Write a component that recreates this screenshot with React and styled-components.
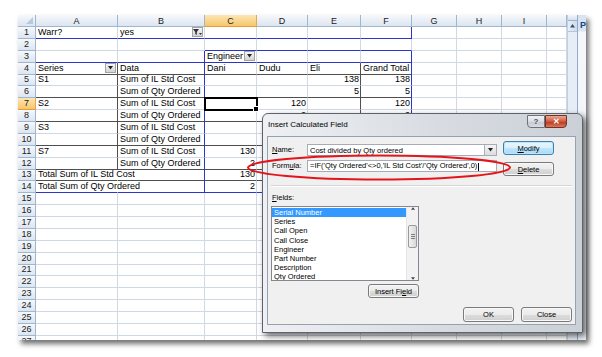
import React from "react";
import styled, { createGlobalStyle, css } from "styled-components";

const GlobalStyle = createGlobalStyle`
  html, body {
    margin: 0;
    padding: 0;
    background: #fff;
  }
  body {
    font-family: "Liberation Sans", Arial, sans-serif;
  }
`;

const BLUE = "#2c35c9";
const DARK = "#4f4f4f";
const GRID = "#d0d8e4";
const HEAD_LINE = "#9eb6ce";

const COLS = ["A", "B", "C", "D", "E", "F", "G", "H", "I", ""];
const WIDTHS = [82, 87, 52, 51, 53, 51, 45, 45, 45, 20];

const TEXT = {
  A1: "Warr?",
  B1: "yes",
  C3: "Engineer",
  A4: "Series",
  B4: "Data",
  C4: "Dani",
  D4: "Dudu",
  E4: "Eli",
  F4: "Grand Total",
  A5: "S1",
  B5: "Sum of IL Std Cost",
  E5: "138",
  F5: "138",
  B6: "Sum of Qty Ordered",
  E6: "5",
  F6: "5",
  A7: "S2",
  B7: "Sum of IL Std Cost",
  D7: "120",
  F7: "120",
  B8: "Sum of Qty Ordered",
  D8: "2",
  F8: "2",
  A9: "S3",
  B9: "Sum of IL Std Cost",
  B10: "Sum of Qty Ordered",
  A11: "S7",
  B11: "Sum of IL Std Cost",
  C11: "130",
  B12: "Sum of Qty Ordered",
  C12: "2",
  A13: "Total Sum of IL Std Cost",
  C13: "130",
  A14: "Total Sum of Qty Ordered",
  C14: "2",
};

const FIELDS = [
  "Serial Number",
  "Series",
  "Call Open",
  "Call Close",
  "Engineer",
  "Part Number",
  "Description",
  "Qty Ordered",
];

// pivot table outline: which edges get a blue or dark line
const borderFor = (r, ci) => {
  let right;
  let bottom;
  if (ci <= 5) {
    if (r === 1 || r === 3 || r === 14) bottom = BLUE;
    if (r === 2 && ci >= 2) bottom = BLUE;
    if ([4, 6, 8, 10, 12, 13].includes(r)) bottom = DARK;
  }
  if (r === 1 && ci === 5) right = BLUE;
  if (r === 3 && (ci === 1 || ci === 5)) right = BLUE;
  if (r >= 4 && r <= 14) {
    if (ci === 0) right = r >= 13 ? "transparent" : DARK;
    if (ci === 1 || ci === 5) right = BLUE;
    if (ci === 4) right = DARK;
  }
  return { right, bottom };
};

const Stage = styled.div`
  position: relative;
  width: 602px;
  height: 357px;
  overflow: hidden;
  background: #fff;
  padding: 15px 0 0 18px;
  box-sizing: border-box;
`;

const ExcelWindow = styled.div`
  display: flex;
  width: 568px;
  height: 325px;
  background: #fff;
  box-shadow: 3px 4px 5px rgba(0, 0, 0, 0.55);
  overflow: hidden;
`;

const Sheet = styled.div`
  display: grid;
  grid-template-columns: 18px ${WIDTHS.map((w) => w + "px").join(" ")};
  grid-template-rows: 12px repeat(27, 11.88px);
  align-content: start;
  font-size: 9px;
  color: #000;
  overflow: hidden;
`;

const headBg = (active) =>
  active
    ? "linear-gradient(#fce6b4, #f7c66c)"
    : "linear-gradient(#f6f8fc, #dce5f0)";

const Corner = styled.div`
  position: relative;
  box-sizing: border-box;
  background: ${headBg(false)};
  border-right: 1px solid ${HEAD_LINE};
  border-bottom: 1px solid ${HEAD_LINE};

  &::after {
    content: "";
    position: absolute;
    right: 2px;
    bottom: 2px;
    border-left: 7px solid transparent;
    border-bottom: 7px solid #b9c8da;
  }
`;

const ColHead = styled.div`
  box-sizing: border-box;
  display: flex;
  align-items: center;
  justify-content: center;
  background: ${(p) => headBg(p.$active)};
  border-right: 1px solid ${(p) => (p.$active ? "#eaa64a" : HEAD_LINE)};
  border-bottom: 1px solid ${(p) => (p.$active ? "#e99a32" : HEAD_LINE)};
  color: #222;
`;

const RowHead = styled(ColHead)`
  line-height: 1;
`;

const Cell = styled.div`
  position: relative;
  box-sizing: border-box;
  display: flex;
  align-items: center;
  justify-content: ${(p) => (p.$num ? "flex-end" : "space-between")};
  padding: 0 1px 0 2px;
  border-right: 1px solid ${(p) => p.$r || GRID};
  border-bottom: 1px solid ${(p) => p.$b || GRID};
  white-space: nowrap;
  line-height: 1;

  ${(p) =>
    p.$active &&
    css`
      outline: 2px solid #000;
      outline-offset: -1px;
      z-index: 2;

      &::after {
        content: "";
        position: absolute;
        right: -3px;
        bottom: -3px;
        width: 4px;
        height: 4px;
        background: #000;
        border: 1px solid #fff;
      }
    `}
`;

const DropButton = styled.span`
  flex-shrink: 0;
  width: 11px;
  height: 10px;
  box-sizing: border-box;
  display: flex;
  align-items: center;
  justify-content: center;
  border: 1px solid #a3a3a3;
  background: linear-gradient(#f7f7f7, #d4d4d4);
`;

const VScroll = styled.div`
  width: 10px;
  flex-shrink: 0;
  box-sizing: border-box;
  display: flex;
  flex-direction: column;
  background: #e6edf6;
  border-left: 1px solid #c3cfdf;
`;

const SplitBox = styled.div`
  height: 5px;
  border-bottom: 1px solid #9fb3cb;
  background: linear-gradient(#f3f6fb, #d5e0ee);
`;

const ScrollArrow = styled.div`
  height: 10px;
  display: flex;
  align-items: center;
  justify-content: center;
  border-bottom: 1px solid #b5c5d9;
  background: linear-gradient(90deg, #e7eef7, #cfdbea);
`;

const TaskPane = styled.div`
  flex: 1;
  overflow: hidden;
  box-sizing: border-box;
  padding: 5px 0 0 2px;
  background: linear-gradient(#d9e4f3 0, #d9e4f3 16px, #f4f7fb 17px, #eef3f9);
  border-left: 1px solid #94aacb;
  color: #15428b;
  font-size: 9px;
  font-weight: bold;
  white-space: nowrap;
`;

const Dialog = styled.div`
  position: absolute;
  left: 262px;
  top: 113px;
  width: 321px;
  height: 220px;
  box-sizing: border-box;
  display: flex;
  flex-direction: column;
  padding: 0 6px 7px 4px;
  border: 1px solid #5d636b;
  border-radius: 6px 6px 0 0;
  background: linear-gradient(90deg, #eef0f3, #d8dce2 55%, #cbd0d7);
  box-shadow: 3px 3px 6px rgba(0, 0, 0, 0.6);
  font-family: "Liberation Sans", Arial, sans-serif;
  color: #000;
`;

const TitleBar = styled.div`
  height: 22px;
  flex-shrink: 0;
  display: flex;
  justify-content: space-between;
  align-items: flex-start;
`;

const Title = styled.span`
  padding-left: 1px;
  font-size: 8px;
  line-height: 22px;
`;

const CaptionGroup = styled.div`
  display: flex;
  margin: 1px 9px 0 0;
`;

const CaptionButton = styled.div`
  width: ${(p) => (p.$close ? 22 : 18)}px;
  height: 13px;
  box-sizing: border-box;
  display: flex;
  align-items: center;
  justify-content: center;
  font-size: 8px;
  font-weight: bold;
  border: 1px solid ${(p) => (p.$close ? "#6e3428" : "#6a727d")};
  border-radius: ${(p) => (p.$close ? "0 0 4px 0" : "0 0 0 4px")};
  color: ${(p) => (p.$close ? "#fff" : "#4a4f57")};
  background: ${(p) =>
    p.$close
      ? "linear-gradient(#e9a896, #d0573c 50%, #c23d22 60%, #d77a62)"
      : "linear-gradient(#f1f3f6, #d9dde3 50%, #c7ccd3 60%, #d9dde3)"};
`;

const Client = styled.div`
  flex: 1;
  box-sizing: border-box;
  display: flex;
  flex-direction: column;
  padding: 4px 3px 0 3px;
  border: 1px solid #96a2b2;
  background: #f0f0f0;
  font-size: 7.5px;
`;

const TopSection = styled.div`
  display: flex;
  gap: 6px;
`;

const LeftCol = styled.div`
  display: flex;
  flex-direction: column;
  gap: 4px;
  margin-top: 3px;
`;

const FieldRow = styled.div`
  display: flex;
  align-items: center;
  height: 12px;
`;

const Label = styled.span`
  width: 36px;
  padding-left: 1px;
  box-sizing: border-box;
  line-height: 10px;
`;

const TextBox = styled.div`
  width: 190px;
  height: 12px;
  box-sizing: border-box;
  display: flex;
  align-items: center;
  justify-content: space-between;
  padding-left: 2px;
  background: #fff;
  border: 1px solid #a4acb8;
  white-space: nowrap;
  overflow: hidden;
`;

const Caret = styled.span`
  display: inline-block;
  width: 1px;
  height: 8px;
  margin-left: 1px;
  background: #000;
  vertical-align: middle;
`;

const ComboArrow = styled.span`
  width: 12px;
  height: 10px;
  box-sizing: border-box;
  display: flex;
  align-items: center;
  justify-content: center;
  border-left: 1px solid #a9b0ba;
  background: linear-gradient(#f4f4f4, #dcdcdc);
`;

const ButtonCol = styled.div`
  display: flex;
  flex-direction: column;
  gap: 7px;
`;

const Button = styled.div`
  width: 51px;
  height: ${(p) => p.$h || 14}px;
  box-sizing: border-box;
  display: flex;
  align-items: center;
  justify-content: center;
  border: 1px solid ${(p) => (p.$default ? "#3c7fb1" : "#7a7a7a")};
  border-radius: 3px;
  background: ${(p) =>
    p.$default
      ? "linear-gradient(#eaf6fd, #d9f0fc 50%, #bee6fd 51%, #a7d9f5)"
      : "linear-gradient(#f2f2f2, #ebebeb 50%, #dddddd 51%, #cfcfcf)"};
  box-shadow: inset 0 0 0 1px ${(p) => (p.$default ? "#bfe6f8" : "#f8f8f8")};
`;

const Separator = styled.div`
  height: 1px;
  margin-top: 9px;
  background: #d6d6d6;
  border-bottom: 1px solid #fff;
`;

const FieldsLabel = styled.div`
  margin-top: 6px;
  height: 10px;
  line-height: 10px;
  padding-left: 1px;
`;

const ListBox = styled.div`
  width: 148px;
  height: 75px;
  margin-top: 3px;
  box-sizing: border-box;
  display: flex;
  border: 1px solid #828790;
  background: #fff;
`;

const ListItems = styled.div`
  flex: 1;
  padding-top: 1px;
  overflow: hidden;
`;

const ListItem = styled.div`
  height: 9.2px;
  line-height: 9.2px;
  padding-left: 2px;
  white-space: nowrap;
  background: ${(p) => (p.$selected ? "#3399ff" : "transparent")};
  color: ${(p) => (p.$selected ? "#fff" : "#000")};
`;

const ListScroll = styled.div`
  width: 11px;
  display: flex;
  flex-direction: column;
  align-items: center;
  justify-content: space-between;
  background: #f2f2f2;
  border-left: 1px solid #e6e6e6;
`;

const Thumb = styled.div`
  width: 9px;
  height: 23px;
  margin-top: -14px;
  box-sizing: border-box;
  display: flex;
  flex-direction: column;
  align-items: center;
  justify-content: center;
  gap: 1px;
  border: 1px solid #9a9a9a;
  border-radius: 2px;
  background: linear-gradient(90deg, #f2f2f2, #d8d8d8);
`;

const Grip = styled.span`
  width: 4px;
  height: 1px;
  background: #7d7d7d;
`;

const InsertRow = styled.div`
  width: 148px;
  margin-top: 3px;
  display: flex;
  justify-content: flex-end;
`;

const BottomRow = styled.div`
  margin-top: 9px;
  display: flex;
  justify-content: flex-end;
  gap: 7px;
`;

const RedRing = styled.svg`
  position: absolute;
  left: 0;
  top: 0;
  pointer-events: none;
`;

const Acc = styled.span`
  text-decoration: underline;
`;

const Tri = ({ up, size = 5, color = "#222" }) => (
  <svg width={size} height={size / 2 + 1} viewBox="0 0 6 4">
    <path d={up ? "M0 4 L3 0 L6 4 Z" : "M0 0 L6 0 L3 4 Z"} fill={color} />
  </svg>
);

const FilterIcon = () => (
  <svg width="9" height="8" viewBox="0 0 9 8">
    <path d="M0 1 H6 L3.8 4 V7 L2.2 6 V4 Z" fill="#333" />
    <path d="M6 5 H9 L7.5 7 Z" fill="#333" />
  </svg>
);

const renderCell = (r, ci) => {
  const col = COLS[ci];
  const key = col + r;
  const value = TEXT[key];
  const { right, bottom } = borderFor(r, ci);
  const num = value !== undefined && /^\d+$/.test(value);
  return (
    <Cell key={key || ci} $r={right} $b={bottom} $num={num} $active={key === "C7"}>
      {value && <span>{value}</span>}
      {key === "B1" && (
        <DropButton>
          <FilterIcon />
        </DropButton>
      )}
      {(key === "A4" || key === "C3") && (
        <DropButton>
          <Tri size={5} />
        </DropButton>
      )}
    </Cell>
  );
};

export default function App() {
  return (
    <>
      <GlobalStyle />
      <Stage>
        <ExcelWindow>
          <Sheet>
            <Corner />
            {COLS.map((c, i) => (
              <ColHead key={"h" + i} $active={c === "C"}>
                {c}
              </ColHead>
            ))}
            {Array.from({ length: 27 }, (_, ri) => {
              const r = ri + 1;
              return (
                <React.Fragment key={r}>
                  <RowHead $active={r === 7}>{r}</RowHead>
                  {COLS.map((_, ci) => renderCell(r, ci))}
                </React.Fragment>
              );
            })}
          </Sheet>
          <VScroll>
            <SplitBox />
            <ScrollArrow>
              <Tri up size={5} color="#3b4f6b" />
            </ScrollArrow>
          </VScroll>
          <TaskPane>PivotTable Field List</TaskPane>
        </ExcelWindow>

        <Dialog>
          <TitleBar>
            <Title>Insert Calculated Field</Title>
            <CaptionGroup>
              <CaptionButton>?</CaptionButton>
              <CaptionButton $close>✕</CaptionButton>
            </CaptionGroup>
          </TitleBar>
          <Client>
            <TopSection>
              <LeftCol>
                <FieldRow>
                  <Label>
                    <Acc>N</Acc>ame:
                  </Label>
                  <TextBox>
                    <span>Cost divided by Qty ordered</span>
                    <ComboArrow>
                      <Tri size={5} />
                    </ComboArrow>
                  </TextBox>
                </FieldRow>
                <FieldRow>
                  <Label>
                    Form<Acc>u</Acc>la:
                  </Label>
                  <TextBox>
                    <span>
                      =IF('Qty Ordered'&lt;&gt;0,'IL Std Cost'/'Qty Ordered',0)
                      <Caret />
                    </span>
                  </TextBox>
                </FieldRow>
              </LeftCol>
              <ButtonCol>
                <Button $default>
                  <span>
                    <Acc>M</Acc>odify
                  </span>
                </Button>
                <Button>
                  <span>
                    <Acc>D</Acc>elete
                  </span>
                </Button>
              </ButtonCol>
            </TopSection>
            <Separator />
            <FieldsLabel>
              <Acc>F</Acc>ields:
            </FieldsLabel>
            <ListBox>
              <ListItems>
                {FIELDS.map((f, i) => (
                  <ListItem key={f} $selected={i === 0}>
                    {f}
                  </ListItem>
                ))}
              </ListItems>
              <ListScroll>
                <Tri up size={4} color="#444" />
                <Thumb>
                  <Grip />
                  <Grip />
                  <Grip />
                </Thumb>
                <Tri size={4} color="#444" />
              </ListScroll>
            </ListBox>
            <InsertRow>
              <Button>
                <span>
                  Insert Fi<Acc>e</Acc>ld
                </span>
              </Button>
            </InsertRow>
            <BottomRow>
              <Button $h={15}>OK</Button>
              <Button $h={15}>Close</Button>
            </BottomRow>
          </Client>
        </Dialog>

        <RedRing width="602" height="357">
          <ellipse
            cx="379"
            cy="167.5"
            rx="131"
            ry="12"
            fill="none"
            stroke="#e3151a"
            strokeWidth="2"
          />
        </RedRing>
      </Stage>
    </>
  );
}
